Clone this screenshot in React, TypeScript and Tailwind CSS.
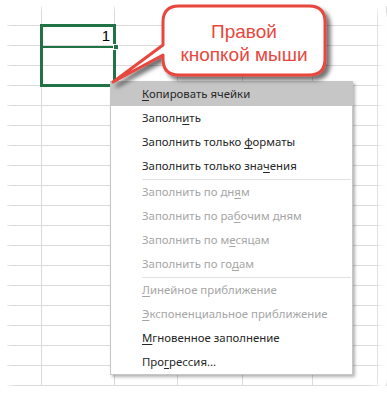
import React from "react";

const cols = [35, 73, 63, 65, 70, 65, 9];
const rowCount = 19;

type Item = { pre: string; key: string; post: string; disabled?: boolean; active?: boolean } | "sep";

const items: Item[] = [
    { pre: "", key: "К", post: "опировать ячейки", active: true },
    { pre: "Заполн", key: "и", post: "ть" },
    { pre: "Заполнить только ", key: "ф", post: "орматы" },
    { pre: "Заполнить только зна", key: "ч", post: "ения" },
    "sep",
    { pre: "Заполнить по дн", key: "я", post: "м", disabled: true },
    { pre: "Заполнить по ра", key: "б", post: "очим дням", disabled: true },
    { pre: "Заполнить по м", key: "е", post: "сяцам", disabled: true },
    { pre: "Заполнить по го", key: "д", post: "ам", disabled: true },
    "sep",
    { pre: "", key: "Л", post: "инейное приближение", disabled: true },
    { pre: "", key: "Э", post: "кспоненциальное приближение", disabled: true },
    { pre: "", key: "М", post: "гновенное заполнение" },
    { pre: "Про", key: "г", post: "рессия..." },
];

function Sheet() {
    return (
        <div className="pt-[6px] pl-[7px]">
            <div className="grid" style={{ gridTemplateColumns: cols.map(c => c + "px").join(" ") }}>
                {Array.from({ length: rowCount * cols.length }).map((_, i) => (
                    <div key={i} className="h-[20px] border-r border-b border-[#dadada]" />
                ))}
            </div>
        </div>
    );
}

function Selection() {
    return (
        <div className="absolute left-[40px] top-[24px] w-[76px] h-[63px] border-[3px] border-[#217346]">
            <div className="h-[19px] flex justify-end items-end pr-[3px] text-[15px] leading-none text-black [font-family:'Liberation_Sans',Arial,sans-serif]">
                <span className="pb-[3px]">1</span>
            </div>
            <div className="h-[2px] bg-[#217346]" />
            <div className="absolute right-[-6px] top-[17px] w-[6px] h-[6px] bg-[#217346] border border-white" />
        </div>
    );
}

function Callout() {
    return (
        <div className="absolute left-[100px] top-0 w-[240px] h-[92px]">
            <svg width="240" height="92" viewBox="0 0 240 92" className="absolute inset-0">
                <defs>
                    <filter id="sh" x="-20%" y="-20%" width="140%" height="150%">
                        <feDropShadow dx="4" dy="4" stdDeviation="2" floodColor="#000" floodOpacity="0.55" />
                    </filter>
                </defs>
                <path
                    d="M79 6 H209 Q225 6 225 22 V59 Q225 75 209 75 H79 Q63 75 63 59 V55 L13 82 L63 45 V22 Q63 6 79 6 Z"
                    fill="#fff"
                    stroke="#e8473e"
                    strokeWidth="3"
                    strokeLinejoin="round"
                    filter="url(#sh)"
                />
            </svg>
            <div className="absolute left-[63px] top-[8px] w-[162px] h-[69px] flex flex-col items-center justify-center text-[19px] leading-[23px] text-[#e8473e] [font-family:'Liberation_Sans',Arial,sans-serif]">
                <span>Правой</span>
                <span>кнопкой мыши</span>
            </div>
        </div>
    );
}

function Menu() {
    return (
        <div className="absolute left-[110px] top-[81px] w-[243px] bg-white border border-[#c6c6c6] shadow-[2px_2px_3px_rgba(0,0,0,0.3)] text-[11.4px] [font-family:'Noto_Sans',sans-serif]">
            {items.map((it, i) =>
                it === "sep" ? (
                    <div key={i} className="h-[2px] flex items-center pl-[31px] pr-[1px]">
                        <div className="h-px w-full bg-[#e2e2e2]" />
                    </div>
                ) : (
                    <div
                        key={i}
                        className={`h-6 flex items-center pl-[31px] ${it.active ? "bg-[#c6c6c6]" : ""} ${it.disabled ? "text-[#a6a6a6]" : "text-[#262626]"}`}
                    >
                        <span className="whitespace-pre">
                            {it.pre}
                            <span className="underline underline-offset-2">{it.key}</span>
                            {it.post}
                        </span>
                    </div>
                )
            )}
        </div>
    );
}

export default function App() {
    return (
        <div className="relative w-[387px] h-[397px] bg-white overflow-hidden">
            <Sheet />
            <div className="pointer-events-none absolute inset-0 rounded-[18px] shadow-[inset_0_0_6px_7px_white]" />
            <Selection />
            <Menu />
            <Callout />
        </div>
    );
}
